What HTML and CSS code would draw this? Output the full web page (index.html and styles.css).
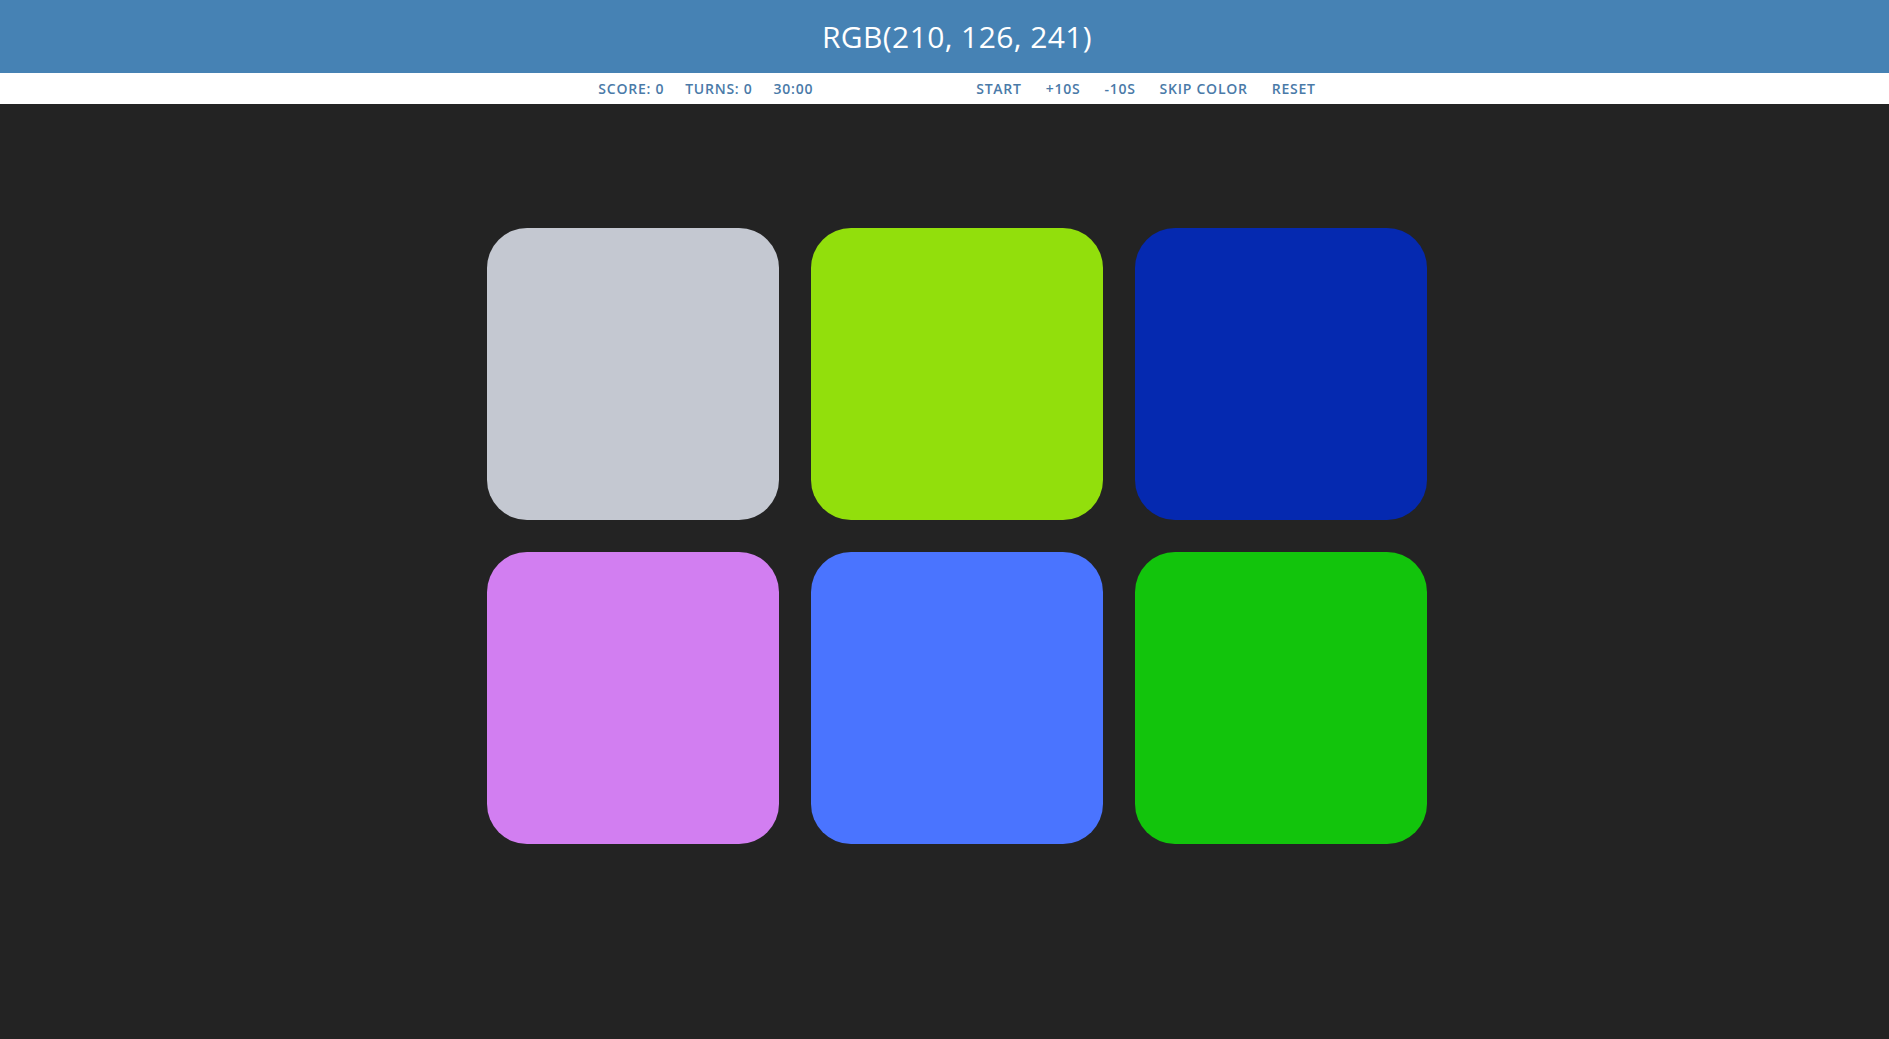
FILE: index.html
```html
<!DOCTYPE html>
<html>
<head>
<meta charset="utf-8">
<title>RGB Game</title>
<link rel="stylesheet" href="styles.css">
</head>
<body>
<header class="title-bar">
  <h1 class="title">RGB(210, 126, 241)</h1>
</header>
<nav class="controls">
  <div class="stats">
    <span class="item">SCORE: 0</span>
    <span class="item">TURNS: 0</span>
    <span class="item">30:00</span>
  </div>
  <div class="actions">
    <span class="item">START</span>
    <span class="item">+10S</span>
    <span class="item">-10S</span>
    <span class="item">SKIP COLOR</span>
    <span class="item">RESET</span>
  </div>
</nav>
<main class="board">
  <div class="grid">
    <div class="swatch c1"></div>
    <div class="swatch c2"></div>
    <div class="swatch c3"></div>
    <div class="swatch c4"></div>
    <div class="swatch c5"></div>
    <div class="swatch c6"></div>
  </div>
</main>
</body>
</html>
```

FILE: styles.css
```css
html, body {
  margin: 0;
  padding: 0;
  height: 100%;
}
body {
  background: #232323;
  font-family: "Open Sans", "Noto Sans", sans-serif;
}
.title-bar {
  background: #4682b4;
  height: 73px;
  display: flex;
  align-items: center;
  justify-content: center;
  padding-left: 25px;
}
.title {
  margin: 0;
  color: #ffffff;
  font-weight: 400;
  font-size: 30px;
  letter-spacing: 0.4px;
  line-height: 1;
}
.controls {
  background: #ffffff;
  height: 31px;
  display: flex;
  align-items: center;
  justify-content: center;
  padding-left: 25px;
  color: #4a7aa8;
  font-size: 14px;
  font-weight: 600;
  letter-spacing: 0.75px;
}
.stats, .actions {
  display: flex;
  gap: 21px;
}
.actions {
  gap: 24px;
}
.stats {
  margin-right: 163px;
}
.board {
  display: flex;
  justify-content: center;
  padding: 124px 0 0 25px;
}
.grid {
  display: grid;
  grid-template-columns: repeat(3, 292px);
  grid-auto-rows: 292px;
  gap: 32px;
}
.swatch {
  border-radius: 40px;
}
.c1 { background: #c4c8d1; }
.c2 { background: #92df0c; }
.c3 { background: #0529b0; }
.c4 { background: #d27ef1; }
.c5 { background: #4a74ff; }
.c6 { background: #12c40c; }
```
